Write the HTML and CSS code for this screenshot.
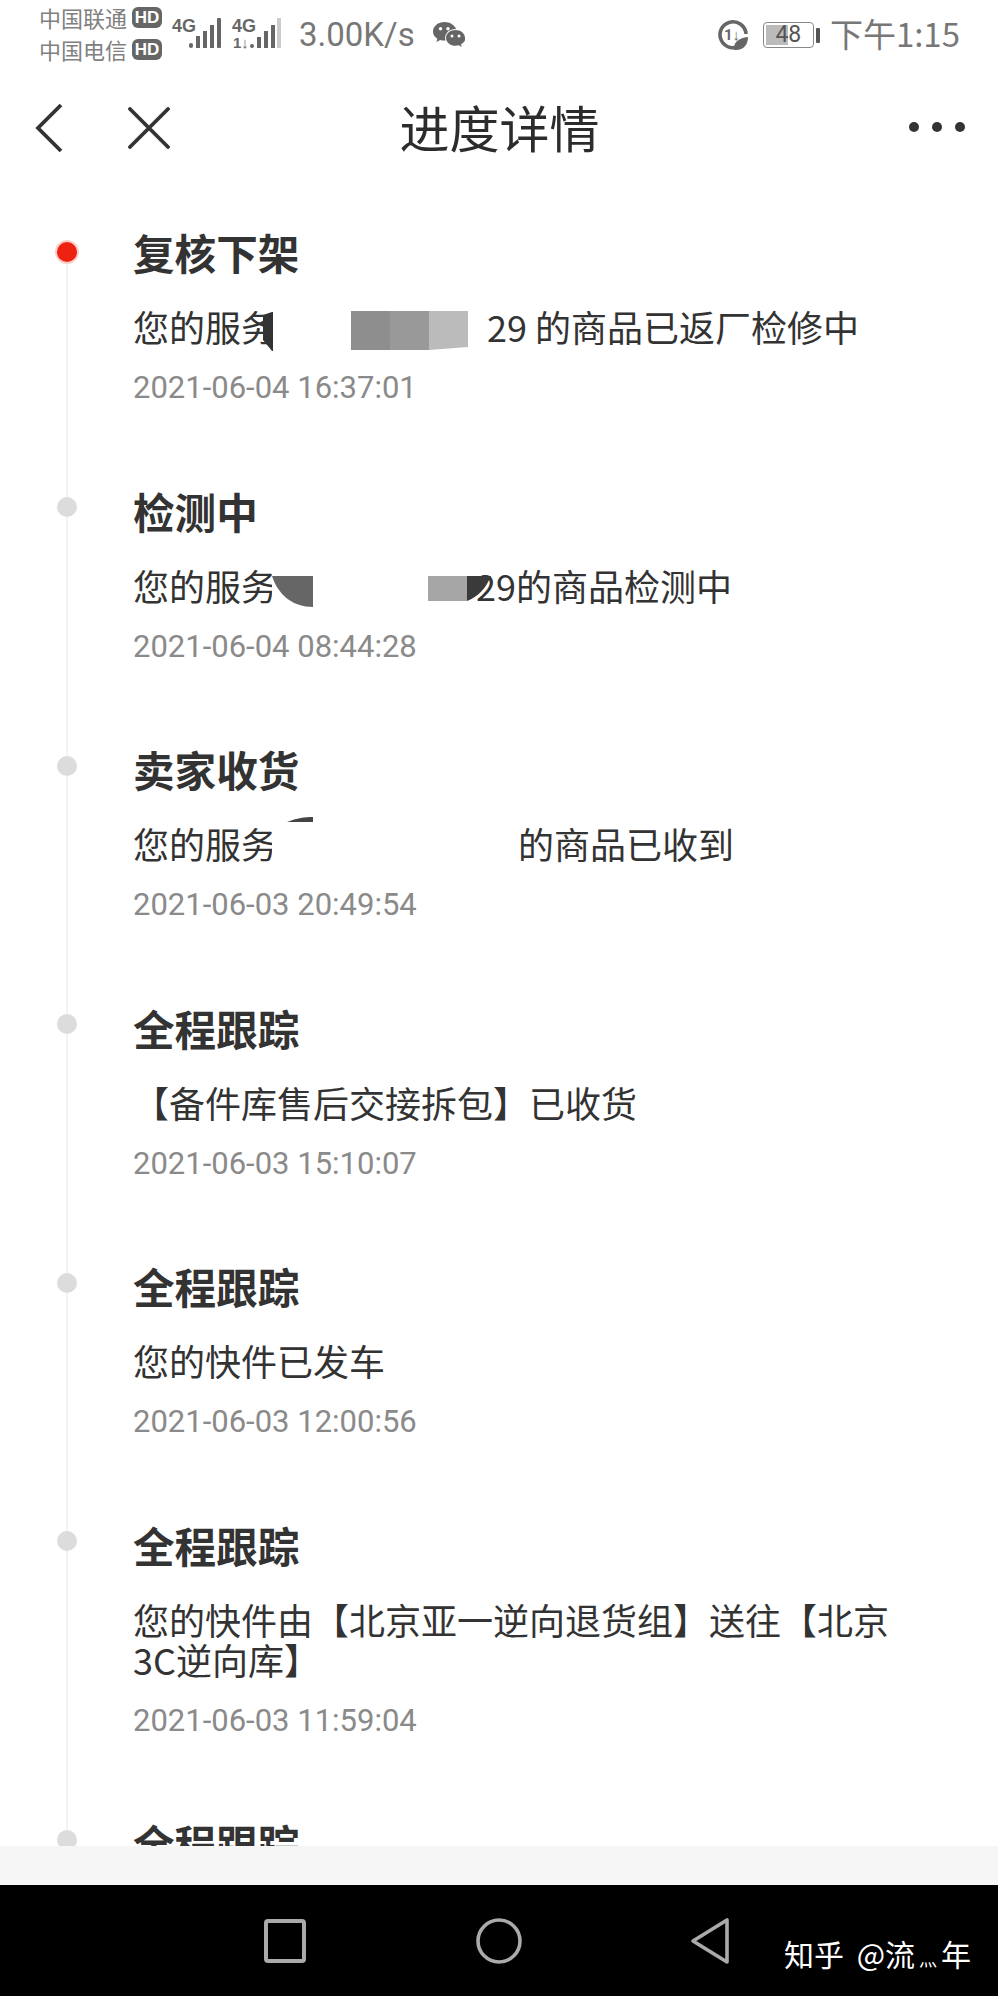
FILE: index.html
```html
<!DOCTYPE html>
<html lang="zh-CN">
<head>
<meta charset="utf-8">
<title>进度详情</title>
<link rel="stylesheet" href="styles.css">
</head>
<body>
<div class="screen">
  <div class="status">
    <div class="carriers">
      <div class="carrier">中国联通<span class="hd">HD</span></div>
      <div class="carrier">中国电信<span class="hd">HD</span></div>
    </div>
    <svg class="sig" width="50" height="34" viewBox="0 0 50 34">
      <text x="0" y="14" class="sig-t">4G</text>
      <rect x="17" y="25" width="4" height="5" rx="2"/>
      <rect x="24" y="18" width="4" height="12"/>
      <rect x="31" y="13" width="4" height="17"/>
      <rect x="38" y="7" width="4" height="23"/>
      <rect x="45" y="0" width="4" height="30" rx="1"/>
    </svg>
    <svg class="sig sig2" width="50" height="34" viewBox="0 0 50 34">
      <text x="0" y="14" class="sig-t">4G</text>
      <text x="1" y="30" class="sig-u">1↓</text>
      <rect x="18" y="26" width="4" height="4" rx="2"/>
      <rect x="25" y="19" width="4" height="11"/>
      <rect x="32" y="13" width="4" height="17"/>
      <rect x="39" y="7" width="4" height="23"/>
      <rect x="45" y="0" width="4" height="30" fill="#ccc"/>
    </svg>
    <span class="speed">3.00K/s</span>
    <svg class="wechat" width="32" height="27" viewBox="0 0 32 27">
      <path d="M11.5 0C5.2 0 0 4.2 0 9.4c0 3 1.7 5.6 4.4 7.3L3.4 20l3.8-2c1.300.4 2.700.6 4.300.6.300 0 .7 0 1 0-.3-.9-.4-1.800-.4-2.700 0-5 4.600-8.900 10.300-8.900h.8C21.300 2.800 16.800 0 11.500 0z" fill="#666"/>
      <path d="M32 15.900c0-4.300-4.300-7.800-9.500-7.800s-9.500 3.500-9.500 7.800 4.300 7.800 9.500 7.800c1.100 0 2.200-.2 3.200-.4l3 1.700-.8-2.800c2.800-1.400 4.600-3.700 4.600-6.300z" fill="#666"/>
      <circle cx="7.500" cy="6.800" r="1.700" fill="#fff"/><circle cx="15" cy="6.800" r="1.700" fill="#fff"/>
      <circle cx="19" cy="14" r="1.500" fill="#fff"/><circle cx="26" cy="14" r="1.500" fill="#fff"/>
    </svg>
    <div class="status-right">
      <svg class="eco" width="32" height="32" viewBox="0 0 32 32">
        <path d="M24 26A13 13 0 1 1 29 15" fill="none" stroke="#666" stroke-width="3.600"/>
        <text x="7" y="21" class="eco-t">1↓</text>
        <path d="M17 31c-1-7 4-12 14-13 0 8-5 14-14 13z" fill="#666"/>
      </svg>
      <div class="battery"><span class="battery-fill"></span><span class="battery-num">48</span></div>
      <span class="battery-nub"></span>
      <span class="clock">下午1:15</span>
    </div>
  </div>

  <div class="nav">
    <div class="nav-left">
      <svg width="28" height="50" viewBox="0 0 28 50" class="ic-back"><path d="M26 2 3 25l23 23" fill="none" stroke="#333" stroke-width="3.800"/></svg>
      <svg width="42" height="42" viewBox="0 0 42 42" class="ic-close"><path d="M2 2l38 38M40 2 2 40" fill="none" stroke="#333" stroke-width="3.800" stroke-linecap="round"/></svg>
    </div>
    <div class="nav-title">进度详情</div>
    <div class="nav-more"><i></i><i></i><i></i></div>
  </div>

  <div class="list">
    <div class="item first">
      <div class="rail"><span class="dot red"></span></div>
      <div class="body">
        <div class="title">复核下架</div>
        <div class="desc">您的服务<span class="mask m1"><svg width="215" height="44" viewBox="0 0 215 44"><rect x="1" y="0" width="8" height="44" fill="#fff"/><path d="M-9 9l9-3h1v39h-1l-9-11z" fill="#333"/><rect x="79" y="5" width="39" height="39" fill="#8e8e8e"/><rect x="118" y="5" width="39" height="39" fill="#999"/><path d="M157 5h39v36l-39 3z" fill="#bbb"/></svg></span>29 的商品已返厂检修中</div>
        <div class="date">2021-06-04 16:37:01</div>
      </div>
    </div>
    <div class="item">
      <div class="rail"><span class="dot"></span></div>
      <div class="body">
        <div class="title">检测中</div>
        <div class="desc">您的服务<span class="mask m2"><svg width="205" height="44" viewBox="0 0 205 44"><rect x="0" y="0" width="8" height="44" fill="#fff"/><path d="M0 11h41v31C21 42 6 30 0 11z" fill="#666"/><path d="M156 11h39v25l-39 0z" fill="#a6a6a6"/><path d="M195 11h24c-5 12-13 21-24 25z" fill="#3a3a3a"/></svg></span>29的商品检测中</div>
        <div class="date">2021-06-04 08:44:28</div>
      </div>
    </div>
    <div class="item">
      <div class="rail"><span class="dot"></span></div>
      <div class="body">
        <div class="title">卖家收货</div>
        <div class="desc">您的服务<span class="mask m3"><svg width="246" height="44" viewBox="0 0 246 44"><rect x="0" y="0" width="8" height="44" fill="#fff"/><path d="M15-1C25-5 33-6 41-6v5z" fill="#444"/></svg></span>的商品已收到</div>
        <div class="date">2021-06-03 20:49:54</div>
      </div>
    </div>
    <div class="item">
      <div class="rail"><span class="dot"></span></div>
      <div class="body">
        <div class="title">全程跟踪</div>
        <div class="desc">【备件库售后交接拆包】已收货</div>
        <div class="date">2021-06-03 15:10:07</div>
      </div>
    </div>
    <div class="item">
      <div class="rail"><span class="dot"></span></div>
      <div class="body">
        <div class="title">全程跟踪</div>
        <div class="desc">您的快件已发车</div>
        <div class="date">2021-06-03 12:00:56</div>
      </div>
    </div>
    <div class="item">
      <div class="rail"><span class="dot"></span></div>
      <div class="body">
        <div class="title">全程跟踪</div>
        <div class="desc">您的快件由【北京亚一逆向退货组】送往【北京<br>3C逆向库】</div>
        <div class="date">2021-06-03 11:59:04</div>
      </div>
    </div>
    <div class="item">
      <div class="rail"><span class="dot"></span></div>
      <div class="body">
        <div class="title">全程跟踪</div>
      </div>
    </div>
  </div>

  <div class="strip"></div>

  <div class="sysbar">
    <svg width="42" height="44" viewBox="0 0 42 44"><rect x="2" y="2" width="38" height="40" rx="2" fill="none" stroke="#aaa" stroke-width="4"/></svg>
    <svg class="home" width="46" height="46" viewBox="0 0 46 46"><circle cx="23" cy="23" r="21" fill="none" stroke="#aaa" stroke-width="3.600"/></svg>
    <svg width="40" height="48" viewBox="0 0 40 48"><path d="M37 3v42L3 24z" fill="none" stroke="#aaa" stroke-width="3.600" stroke-linejoin="round"/></svg>
    <div class="mark">知乎 @流<small>灬</small>年</div>
  </div>
</div>
</body>
</html>
```

FILE: styles.css
```css
* { box-sizing: border-box; }
html, body { margin: 0; padding: 0; background: #fff; }
body { font-family: "Noto Sans CJK SC", "Noto Sans", sans-serif; }

.screen {
  width: 998px;
  height: 1996px;
  display: flex;
  flex-direction: column;
  overflow: hidden;
}

/* status bar */
.status {
  height: 70px;
  flex: none;
  display: flex;
  align-items: center;
  padding: 0 38px 0 39px;
  color: #777;
}
.carriers { width: 124px; flex: none; display: flex; flex-direction: column; gap: 9px; margin-top: -3px; }
.carrier { display: flex; align-items: center; font-size: 22px; line-height: 23px; color: #808080; white-space: nowrap; }
.hd {
  width: 30px;
  height: 21px;
  flex: none;
  margin-left: 5px;
  border-radius: 6px;
  background: #666;
  color: #fff;
  font: bold 17px/21px "Liberation Sans", sans-serif;
  text-align: center;
}
.sig { margin: 0 0 0 9px; flex: none; fill: #666; }
.sig2 { margin-left: 10px; }
.sig-t { font: bold 18px "Liberation Sans Narrow", "Liberation Sans", sans-serif; fill: #666; }
.sig-u { font: bold 15px "Liberation Sans Narrow", "Liberation Sans", sans-serif; fill: #666; }
.speed { margin-left: 17px; font: 400 33px/40px Roboto, sans-serif; color: #777; }
.wechat { margin-left: 18px; flex: none; }
.status-right { margin-left: auto; display: flex; align-items: center; }
.eco { flex: none; }
.eco-t { font: bold 15px Roboto, sans-serif; fill: #666; }
.battery {
  position: relative;
  width: 51px;
  height: 26px;
  margin-left: 14px;
  border: 1.500px solid #888;
  border-radius: 4px;
  padding: 2px;
}
.battery-fill { display: block; width: 22px; height: 100%; background: #bbb; }
.battery-num {
  position: absolute;
  inset: 0;
  text-align: center;
  font: 400 23px/23px Roboto, sans-serif;
  color: #555;
}
.battery-nub { width: 4px; height: 15px; margin-left: 2px; border-radius: 1px; background: #555; }
.clock { margin: -4px 0 0 10px; font-size: 33px; line-height: 40px; color: #777; }

/* nav */
.nav {
  height: 116px;
  flex: none;
  display: grid;
  grid-template-columns: 1fr auto 1fr;
  align-items: center;
  padding: 0 33px 0 35px;
}
.nav-left { display: flex; align-items: center; gap: 65px; }
.nav-title { margin: -5px 1px 0 0; font-size: 50px; line-height: 60px; color: #2c2c2c; }
.nav-more { justify-self: end; display: flex; gap: 13px; margin-top: -2px; }
.nav-more i { width: 10px; height: 10px; border-radius: 50%; background: #333; }

/* timeline */
.list { flex: 1; min-height: 0; overflow: hidden; padding: 40px 0 0 57px; }
.item { display: flex; }
.rail {
  width: 20px;
  flex: none;
  padding-top: 12.500px;
  background: linear-gradient(#f3f3f3, #f3f3f3) center / 2px 100% no-repeat;
}
.item.first .rail { padding-top: 16px; background-size: 2px calc(100% - 26px); background-position: bottom; }
.dot { display: block; width: 20px; height: 20px; border-radius: 50%; background: #dcdcdc; }
.dot.red {
  background: #ee2211;
  box-shadow: 0 0 0 2px #fbcfc9;
}
.body { margin-left: 56px; padding-bottom: 76.500px; }
.title { font-size: 41.600px; font-weight: 700; line-height: 52px; color: #333; }
.desc { margin-top: 28px; font-size: 36px; line-height: 40px; color: #333; white-space: nowrap; }
.date { margin-top: 22px; font: 400 31px/40px Roboto, sans-serif; color: #8a8a8a; }

.mask { display: inline-block; position: relative; height: 40px; vertical-align: top; z-index: 1; }
.mask svg { position: absolute; left: -5px; top: 0; overflow: visible; }
.m1 { width: 210px; }
.m2 { width: 199px; }
.m3 { width: 241px; }

/* bottom */
.strip { height: 39px; flex: none; background: #f6f6f6; }
.sysbar {
  position: relative;
  height: 111px;
  flex: none;
  background: #000;
  display: flex;
  align-items: center;
  gap: 169px;
  padding: 0 0 0 264px;
}
.sysbar svg { flex: none; }
.sysbar .home { margin: 0 -1px 0 1px; }
.mark {
  position: absolute;
  left: 784px;
  top: 48px;
  font-size: 30px;
  line-height: 40px;
  word-spacing: 6px;
  color: #fff;
  white-space: nowrap;
}
.mark small { display: inline-block; width: 26px; font-size: 18px; text-align: center; }
```
